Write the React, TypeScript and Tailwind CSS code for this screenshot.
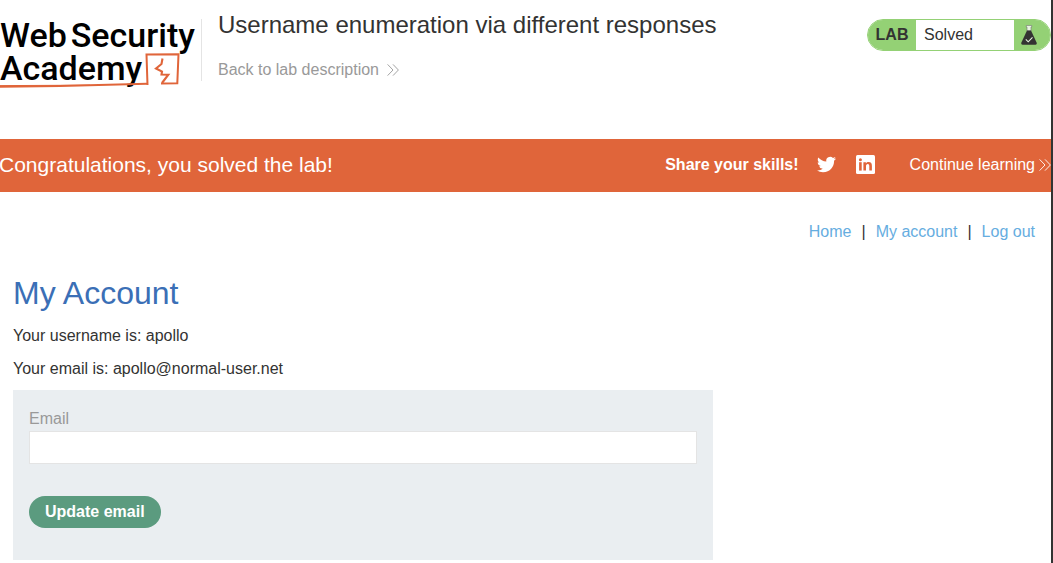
import React from "react";

function Chevrons({ className }: { className: string }) {
  return (
    <svg className={className} viewBox="0 0 12 12" fill="none" stroke="currentColor" strokeWidth="0.9" aria-hidden="true">
      <path d="M0.6 0.4 L6 6 L0.6 11.6 M6 0.4 L11.4 6 L6 11.6" />
    </svg>
  );
}

function Logo() {
  return (
    <a
      href="#"
      className="relative block w-[201px] shrink-0 whitespace-nowrap pt-[19px] font-['Roboto',sans-serif] text-[34px] font-medium leading-[33px] text-black"
    >
      <span className="flex gap-1">
        <span>Web</span>
        <span>Security</span>
      </span>
      <span className="block">Academy</span>
      <svg className="absolute left-0 top-[50px] h-[40px] w-[184px]" viewBox="0 0 184 40" fill="none" stroke="#e0653a" aria-hidden="true">
        <path d="M0 36.8 L60 36 L147 33.8" strokeWidth="2" />
        <path d="M0 35.6 L90 35.2" strokeWidth="1" />
        <path d="M147.5 35 L146.5 4.5 L178.5 4.2 L177.3 33.2 L161 33.6" strokeWidth="2" />
        <path d="M162.5 8.5 L161.5 14 L156 18.5 L162 21.5 L161.5 24.5 L168.3 24.7 L162 33" strokeWidth="2.1" />
      </svg>
    </a>
  );
}

function LabStatus() {
  return (
    <div className="flex h-8 w-[184px] shrink-0 items-stretch overflow-hidden rounded-full border border-[#94d175] bg-white text-base">
      <span className="flex w-12 items-center justify-center bg-[#94d175] font-bold">LAB</span>
      <span className="flex flex-1 items-center pl-2">Solved</span>
      <span className="flex w-9 items-center bg-[#94d175] pl-[7px]">
        <svg className="h-5 w-4" viewBox="0 0 16 20" aria-hidden="true">
          <path d="M5.3 0.5 H10.7 V2 H10 V6 H6 V2 H5.3 Z" fill="#e6f3df" stroke="#777" strokeWidth="0.6" />
          <path d="M6 5.5 H10 L15.8 18 Q16 19.8 14.5 19.8 H1.5 Q0 19.8 0.2 18 Z" fill="#333332" />
          <path d="M4.8 14.3 L7.2 16.8 L11.5 12.3" fill="none" stroke="#e6f3df" strokeWidth="1.1" />
        </svg>
      </span>
    </div>
  );
}

function Banner() {
  return (
    <section className="flex h-[53px] items-center bg-[#e0653a] pb-0.5 text-white">
      <p className="-ml-px flex-1 whitespace-nowrap text-[21px]">Congratulations, you solved the lab!</p>
      <span className="font-bold">Share your skills!</span>
      <a href="#" aria-label="Share on Twitter" className="ml-[18px]">
        <svg className="h-[19px] w-[19px]" viewBox="0 1 24 22" fill="currentColor" aria-hidden="true">
          <path d="M23.953 4.57a10 10 0 0 1-2.825.775 4.958 4.958 0 0 0 2.163-2.723c-.951.555-2.005.959-3.127 1.184a4.92 4.92 0 0 0-8.384 4.482C7.69 8.095 4.067 6.13 1.64 3.162a4.822 4.822 0 0 0-.666 2.475c0 1.71.87 3.213 2.188 4.096a4.904 4.904 0 0 1-2.228-.616v.06a4.923 4.923 0 0 0 3.946 4.827 4.996 4.996 0 0 1-2.212.085 4.936 4.936 0 0 0 4.604 3.417 9.867 9.867 0 0 1-6.102 2.105c-.39 0-.779-.023-1.17-.067a13.995 13.995 0 0 0 7.557 2.209c9.053 0 13.998-7.496 13.998-13.985 0-.21 0-.42-.015-.63A9.935 9.935 0 0 0 24 4.59z" />
        </svg>
      </a>
      <a href="#" aria-label="Share on LinkedIn" className="ml-5">
        <svg className="h-[19px] w-[19px]" viewBox="0 0 19 19" aria-hidden="true">
          <rect width="19" height="19" rx="1.5" fill="currentColor" />
          <g fill="#e0653a">
            <circle cx="4.4" cy="4.7" r="1.5" />
            <rect x="3.1" y="7.2" width="2.6" height="8.4" />
            <path d="M7.4 7.2 H9.9 V8.4 C10.5 7.4 11.4 7 12.6 7 C15.2 7 15.9 8.6 15.9 11 V15.6 H13.3 V11.4 C13.3 10 13 9.1 11.8 9.1 C10.5 9.1 10 10 10 11.4 V15.6 H7.4 Z" />
          </g>
        </svg>
      </a>
      <a href="#" className="ml-[35px] flex items-center gap-1 whitespace-nowrap">
        Continue learning
        <Chevrons className="h-3 w-3" />
      </a>
    </section>
  );
}

export default function App() {
  return (
    <div className="min-h-screen border-r-2 border-[#333332] bg-white font-['Liberation_Sans',Arial,sans-serif] text-base text-[#333332]">
      <header className="flex h-[139px] items-start">
        <Logo />
        <div className="mt-[19px] h-[62px] w-px shrink-0 bg-[#e4e4e4]" />
        <div className="flex-1 pl-4 pt-[9px]">
          <h1 className="text-2xl">Username enumeration via different responses</h1>
          <a href="#" className="mt-[17px] inline-flex items-center gap-2 text-[#999]">
            Back to lab description
            <Chevrons className="h-3 w-3" />
          </a>
        </div>
        <div className="pt-[19px]">
          <LabStatus />
        </div>
      </header>
      <Banner />
      <main className="px-[13px] pb-[3px] pt-7">
        <nav className="flex justify-end gap-2.5 pr-[3px]">
          <a href="#" className="text-[#66addf]">Home</a>
          <span>|</span>
          <a href="#" className="text-[#66addf]">My account</a>
          <span>|</span>
          <a href="#" className="text-[#66addf]">Log out</a>
        </nav>
        <h2 className="mt-7 text-[32px] leading-[42px] text-[#3b6fb6]">My Account</h2>
        <p className="mt-2.5">Your username is: apollo</p>
        <p className="mt-[9px]">
          Your email is: <span>apollo@normal-user.net</span>
        </p>
        <form className="mt-[9px] max-w-[700px] bg-[#eaeef1] px-4 pb-8 pt-[17px]" onSubmit={(e) => e.preventDefault()}>
          <label htmlFor="email" className="block text-[#999]">Email</label>
          <input id="email" type="email" className="block h-[33px] w-full border border-[#e4e4e4] bg-white px-2" />
          <button type="submit" className="mt-8 block h-8 rounded-full bg-[#5b9b7f] px-4 font-bold text-white">
            Update email
          </button>
        </form>
      </main>
    </div>
  );
}
